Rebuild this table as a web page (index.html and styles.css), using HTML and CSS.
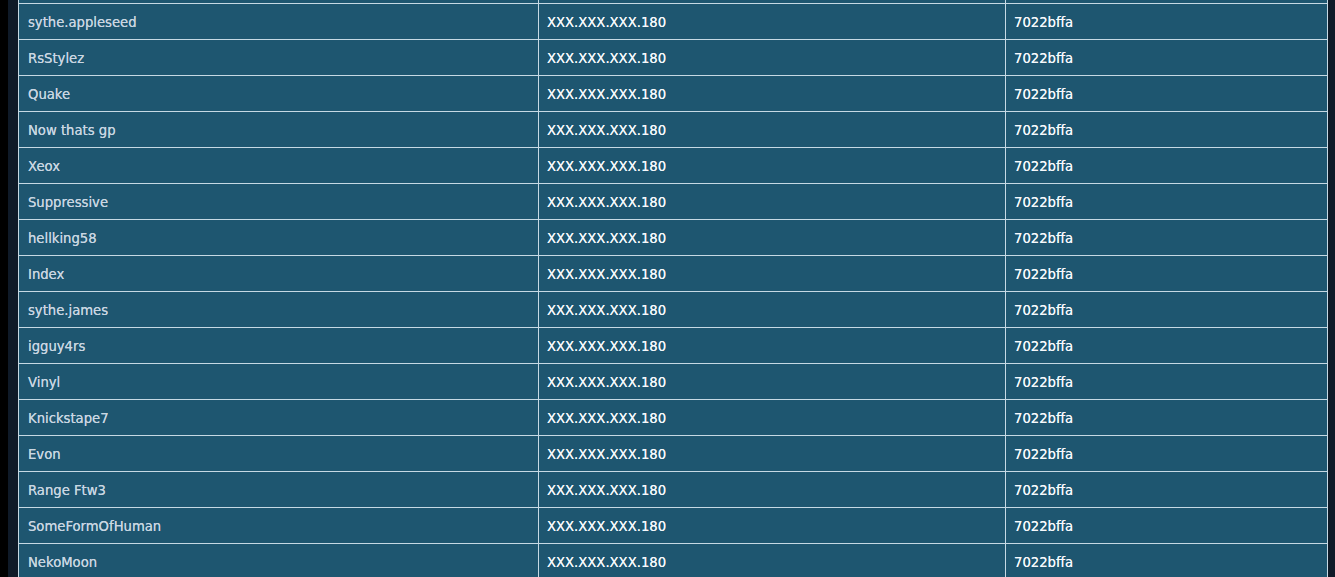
FILE: index.html
```html
<!DOCTYPE html>
<html>
<head>
<meta charset="utf-8">
<link rel="stylesheet" href="styles.css">
</head>
<body>
<div class="rail"></div>
<div class="page">
<table class="log">
<colgroup><col class="c-name"><col class="c-ip"><col class="c-hash"></colgroup>
<tbody>
<tr class="lead"><td class="name"></td><td class="ip"></td><td class="hash"></td></tr>
<tr><td class="name">sythe.appleseed</td><td class="ip">XXX.XXX.XXX.180</td><td class="hash">7022bffa</td></tr>
<tr><td class="name">RsStylez</td><td class="ip">XXX.XXX.XXX.180</td><td class="hash">7022bffa</td></tr>
<tr><td class="name">Quake</td><td class="ip">XXX.XXX.XXX.180</td><td class="hash">7022bffa</td></tr>
<tr><td class="name">Now thats gp</td><td class="ip">XXX.XXX.XXX.180</td><td class="hash">7022bffa</td></tr>
<tr><td class="name">Xeox</td><td class="ip">XXX.XXX.XXX.180</td><td class="hash">7022bffa</td></tr>
<tr><td class="name">Suppressive</td><td class="ip">XXX.XXX.XXX.180</td><td class="hash">7022bffa</td></tr>
<tr><td class="name">hellking58</td><td class="ip">XXX.XXX.XXX.180</td><td class="hash">7022bffa</td></tr>
<tr><td class="name">Index</td><td class="ip">XXX.XXX.XXX.180</td><td class="hash">7022bffa</td></tr>
<tr><td class="name">sythe.james</td><td class="ip">XXX.XXX.XXX.180</td><td class="hash">7022bffa</td></tr>
<tr><td class="name">igguy4rs</td><td class="ip">XXX.XXX.XXX.180</td><td class="hash">7022bffa</td></tr>
<tr><td class="name">Vinyl</td><td class="ip">XXX.XXX.XXX.180</td><td class="hash">7022bffa</td></tr>
<tr><td class="name">Knickstape7</td><td class="ip">XXX.XXX.XXX.180</td><td class="hash">7022bffa</td></tr>
<tr><td class="name">Evon</td><td class="ip">XXX.XXX.XXX.180</td><td class="hash">7022bffa</td></tr>
<tr><td class="name">Range Ftw3</td><td class="ip">XXX.XXX.XXX.180</td><td class="hash">7022bffa</td></tr>
<tr><td class="name">SomeFormOfHuman</td><td class="ip">XXX.XXX.XXX.180</td><td class="hash">7022bffa</td></tr>
<tr><td class="name">NekoMoon</td><td class="ip">XXX.XXX.XXX.180</td><td class="hash">7022bffa</td></tr>
</tbody>
</table>
</div>
</body>
</html>
```
FILE: styles.css
```css
html, body {
  margin: 0;
  padding: 0;
  height: 100%;
  overflow: hidden;
}
body {
  display: flex;
  background: #000;
  font-family: "DejaVu Sans", Verdana, sans-serif;
}
.rail {
  width: 8px;
  flex: none;
  background: #000;
}
.page {
  flex: 1;
  background: #0f1a28;
  padding: 0 7px 0 10px;
  overflow: hidden;
}
.log {
  width: 100%;
  table-layout: fixed;
  border-collapse: separate;
  border-spacing: 0;
  border-left: 1px solid #c6d9e4;
  border-top: 1px solid #c6d9e4;
  margin-top: -33px;
}
.c-name { width: 520px; }
.c-ip { width: 467px; }
.log td {
  box-sizing: border-box;
  height: 36px;
  padding: 2px 0 0 9px;
  background: #1e5670;
  border-right: 1px solid #c6d9e4;
  border-bottom: 1px solid #c6d9e4;
  font-size: 13.2px;
  vertical-align: middle;
  white-space: nowrap;
  text-shadow: 0 0 0.4px currentColor;
}
.log td.name { color: #c9d6e2; }
.log td.ip, .log td.hash { color: #f6f9fc; padding-left: 8px; }
```
